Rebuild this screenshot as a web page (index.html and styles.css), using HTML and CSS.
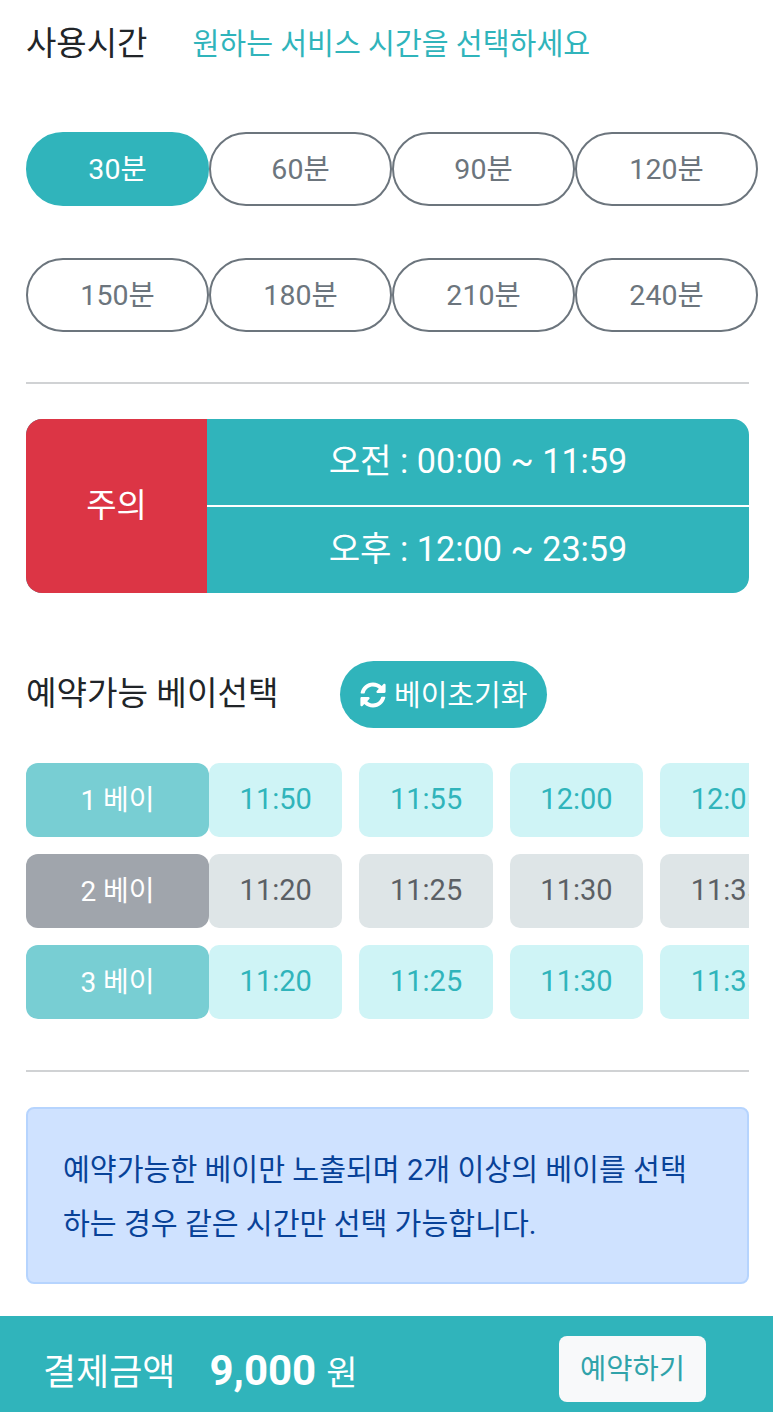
FILE: index.html
```html
<!DOCTYPE html>
<html lang="ko">
<head>
<meta charset="utf-8">
<title>예약</title>
<link rel="stylesheet" href="styles.css">
</head>
<body>
<main class="content">
  <header class="title-row">
    <h2 class="title">사용시간</h2>
    <p class="hint">원하는 서비스 시간을 선택하세요</p>
  </header>
  <div class="pills">
    <button class="pill active">30분</button>
    <button class="pill">60분</button>
    <button class="pill">90분</button>
    <button class="pill">120분</button>
    <button class="pill">150분</button>
    <button class="pill">180분</button>
    <button class="pill">210분</button>
    <button class="pill">240분</button>
  </div>
  <hr class="rule rule-top">
  <section class="notice">
    <div class="notice-label">주의</div>
    <div class="notice-times">
      <div class="notice-time">오전 : 00:00 ~ 11:59</div>
      <div class="notice-time">오후 : 12:00 ~ 23:59</div>
    </div>
  </section>
  <div class="bay-head">
    <h2 class="bay-title">예약가능 베이선택</h2>
    <button class="reset">
      <svg class="reset-icon" viewBox="0 0 512 512" aria-hidden="true"><path fill="currentColor" d="M370.72 133.28C339.458 104.008 298.888 87.962 255.848 88c-77.458.068-144.328 53.178-162.791 126.85-1.344 5.363-6.122 9.15-11.651 9.15H24.103c-7.498 0-13.194-6.807-11.807-14.176C33.933 94.924 134.813 8 256 8c66.448 0 126.791 26.136 171.315 68.685L463.03 40.97C478.149 25.851 504 36.559 504 57.941V192c0 13.255-10.745 24-24 24H345.941c-21.382 0-32.09-25.851-16.971-40.971l41.75-41.749zM32 296h134.059c21.382 0 32.09 25.851 16.971 40.971l-41.75 41.75c31.262 29.273 71.835 45.319 114.876 45.28 77.418-.07 144.315-53.144 162.787-126.849 1.344-5.363 6.122-9.15 11.651-9.15h57.304c7.498 0 13.194 6.807 11.807 14.176C478.067 417.076 377.187 504 256 504c-66.448 0-126.791-26.136-171.315-68.685L48.97 471.03C33.851 486.149 8 475.441 8 454.059V320c0-13.255 10.745-24 24-24z"/></svg>
      <span>베이초기화</span>
    </button>
  </div>
  <div class="bays">
    <div class="bay">
      <div class="bay-name">1 베이</div>
      <div class="slot">11:50</div>
      <div class="slot">11:55</div>
      <div class="slot">12:00</div>
      <div class="slot">12:05</div>
    </div>
    <div class="bay off">
      <div class="bay-name">2 베이</div>
      <div class="slot">11:20</div>
      <div class="slot">11:25</div>
      <div class="slot">11:30</div>
      <div class="slot">11:35</div>
    </div>
    <div class="bay">
      <div class="bay-name">3 베이</div>
      <div class="slot">11:20</div>
      <div class="slot">11:25</div>
      <div class="slot">11:30</div>
      <div class="slot">11:35</div>
    </div>
  </div>
  <hr class="rule rule-bottom">
  <p class="info">예약가능한 베이만 노출되며 2개 이상의 베이를 선택<br>하는 경우 같은 시간만 선택 가능합니다.</p>
</main>
<footer class="paybar">
  <div class="pay-total">
    <span class="pay-label">결제금액</span>
    <strong class="pay-amount">9,000</strong>
    <span class="pay-unit">원</span>
  </div>
  <button class="pay-btn">예약하기</button>
</footer>
</body>
</html>
```

FILE: styles.css
```css
* { box-sizing: border-box; }
html, body { margin: 0; padding: 0; }
body {
  width: 773px;
  height: 1412px;
  overflow: hidden;
  background: #fff;
  font-family: Roboto, "Noto Sans CJK KR", sans-serif;
  display: flex;
  flex-direction: column;
  color: #212529;
}
button { font-family: inherit; cursor: pointer; }
.content { flex: 1; padding: 0 24px 0 26px; }

.title-row { display: flex; align-items: center; height: 84px; gap: 45px; padding-bottom: 2px; }
.title { margin: 0; font-size: 33px; font-weight: 400; color: #212529; }
.hint { margin: 0; font-size: 29.2px; color: #30b4bb; }

.pills {
  display: grid;
  grid-template-columns: repeat(4, 183px);
  grid-auto-rows: 74px;
  row-gap: 52px;
  margin-top: 48px;
}
.pill {
  border: 2px solid #6c757d;
  border-radius: 37px;
  background: #fff;
  color: #6c757d;
  font-size: 28.5px;
  padding: 0 0 6px;
}
.pill.active { background: #30b4bb; border-color: #30b4bb; color: #fff; }

.rule { margin: 0; border: 0; height: 2px; background: #d0d2d4; }
.rule-top { margin-top: 50px; }
.rule-bottom { margin-top: 51px; }

.notice {
  display: flex;
  height: 174px;
  margin-top: 35px;
  border-radius: 16px;
  overflow: hidden;
  color: #fff;
  background: #30b4bb;
}
.notice-label {
  width: 181px;
  background: #dc3545;
  display: flex;
  align-items: center;
  justify-content: center;
  font-size: 33px;
  padding-bottom: 6px;
}
.notice-times { flex: 1; display: flex; flex-direction: column; }
.notice-time {
  flex: 1;
  display: flex;
  align-items: center;
  justify-content: center;
  font-size: 34.2px;
  padding-bottom: 8px;
}
.notice-time + .notice-time { border-top: 2px solid #fff; }

.bay-head { display: flex; align-items: center; height: 67px; margin-top: 68px; }
.bay-title { margin: 0; width: 314px; font-size: 33.2px; font-weight: 400; color: #212529; padding-bottom: 8px; }
.reset {
  display: flex;
  align-items: center;
  gap: 8px;
  width: 207px;
  height: 67px;
  padding: 0 0 0 20px;
  border: 0;
  border-radius: 34px;
  background: #30b4bb;
  color: #fff;
  font-size: 29px;
}
.reset span { padding-bottom: 4px; }
.reset-icon { width: 26px; height: 26px; flex: none; }

.bays { display: flex; flex-direction: column; gap: 17px; margin-top: 35px; overflow: hidden; }
.bay { display: flex; height: 74px; }
.bay-name {
  flex: 0 0 183px;
  display: flex;
  align-items: center;
  justify-content: center;
  border-radius: 12px;
  background: #78ced3;
  color: #fff;
  font-size: 28px;
  padding-bottom: 4px;
}
.slot {
  flex: 0 0 133.4px;
  display: flex;
  align-items: center;
  justify-content: center;
  margin-right: 17px;
  border-radius: 10px;
  background: #cff4f6;
  color: #30b4bb;
  font-size: 29px;
  padding-bottom: 2px;
}
.off .bay-name { background: #a0a5ac; }
.off .slot { background: #dee5e7; color: #5b6065; }

.info {
  height: 177px;
  margin: 35px 0 0;
  padding: 34px 35px 0;
  border: 2px solid #b6d4fe;
  border-radius: 8px;
  background: #cfe2ff;
  color: #084298;
  font-size: 29.2px;
  line-height: 54px;
  white-space: nowrap;
}

.paybar {
  flex: none;
  height: 96px;
  background: #30b4bb;
  display: flex;
  align-items: center;
  justify-content: space-between;
  padding: 10px 67px 0 43px;
  color: #fff;
}
.pay-total { display: flex; align-items: baseline; }
.pay-label { font-size: 36px; }
.pay-amount { font-size: 42px; font-weight: 700; margin-left: 34px; }
.pay-unit { font-size: 34px; margin-left: 10px; }
.pay-btn {
  width: 147px;
  height: 66px;
  border: 0;
  border-radius: 8px;
  background: #f8f9fa;
  color: #30a3aa;
  font-size: 28.5px;
  padding: 0 0 6px;
}
```
